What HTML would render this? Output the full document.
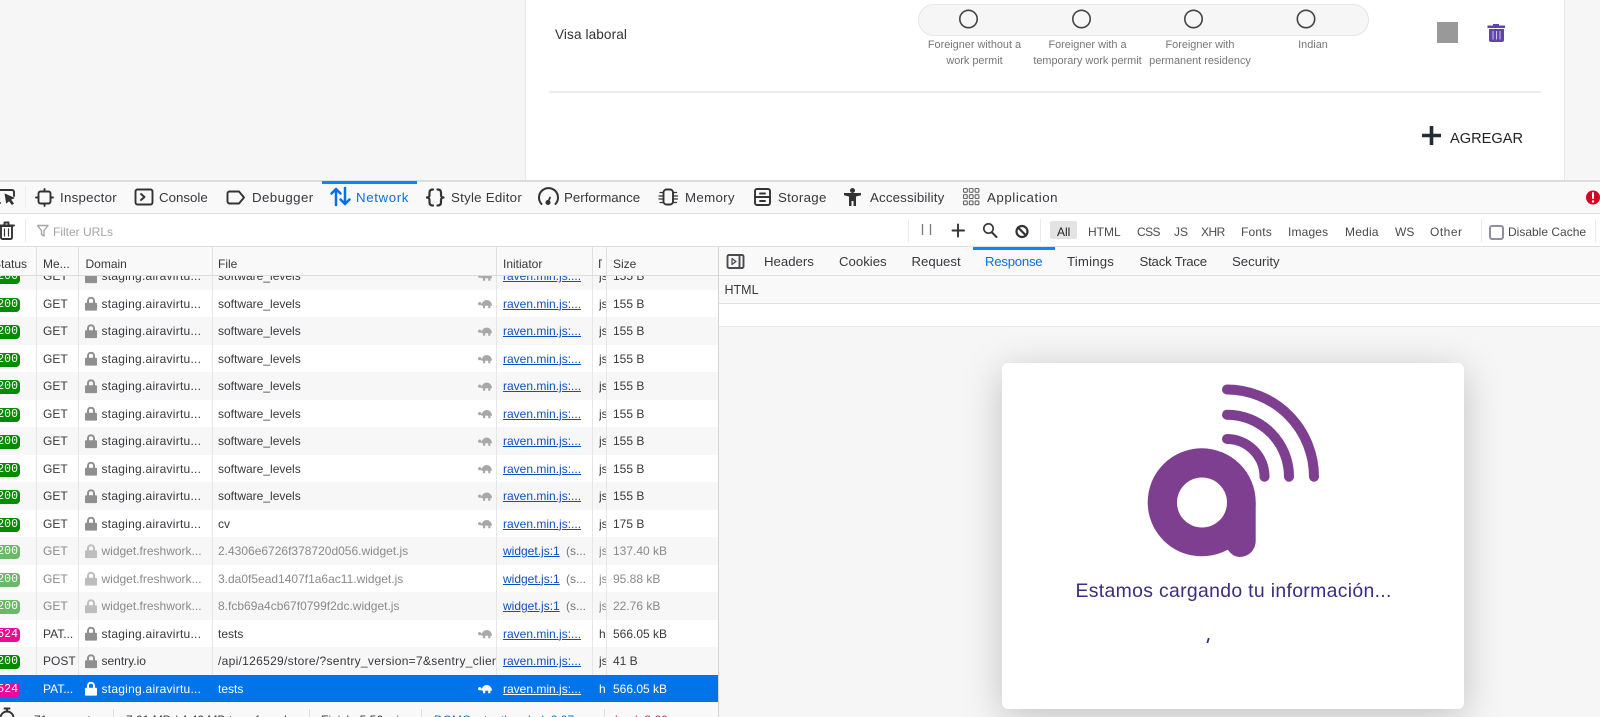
<!DOCTYPE html>
<html><head><meta charset="utf-8"><title>Network</title>
<style>
html,body{margin:0;padding:0;width:1600px;height:717px;overflow:hidden;background:#f6f6f6;font-family:"Liberation Sans",sans-serif;color:#333}
div,span{position:absolute;white-space:nowrap;box-sizing:border-box}
svg{position:absolute;left:0;top:0;overflow:visible}
.tb{font-size:13.3px;top:189px;line-height:17px;color:#38383d}
.fl{font-size:12px;top:225px;line-height:15px;color:#4a4a4f}
.h{font-size:12px;top:257px;line-height:15px;color:#38383d}
.rt{font-size:13.2px;top:253px;line-height:17px;color:#38383d}
.r{left:0;width:718px;height:27.5px;line-height:29px;font-size:12px;color:#38383d;overflow:hidden;background:#fff}
.g{background:#f7f7f7}
.w{color:#8a8a8a}
.b{left:-6px;top:8px;width:26px;height:14px;border-radius:4px;background:#058b00;color:#fff;font:11.5px/14px "Liberation Mono",monospace;text-align:right;padding-right:2px}
.p{background:#e90a9b}
.w .b{background:#6cb868}
.m{left:43px}.d{left:101.5px}.a{letter-spacing:.25px}.f{left:218px;width:278px;overflow:hidden}.i{left:503px;color:#0f4fbd;text-decoration:underline}.x{left:566px;color:#777}.t{left:599px;width:7px;overflow:hidden}.z{left:613px}
.w .i{color:#0f4fbd}
.s{background:#0074e8;color:#fff}.s .i{color:#fff}
.lb{font-size:10.9px;color:#777;text-align:center;line-height:16px;width:130px;top:37px}
</style></head><body>

<!-- top page card -->
<div style="left:525px;top:0;width:1040px;height:180px;background:#fff;border-left:1px solid #e8e8e8;border-right:1px solid #e8e8e8"></div>
<div style="left:555px;top:26px;font-size:13.6px;letter-spacing:.1px;line-height:18px;color:#333">Visa laboral</div>
<div style="left:918px;top:4px;width:451px;height:32px;border-radius:16px;background:#f6f6f6;border:1px solid #e6e6e6"></div>
<div class="lb" style="left:909.5px">Foreigner without a<br>work permit</div>
<div class="lb" style="left:1022.5px">Foreigner with a<br>temporary work permit</div>
<div class="lb" style="left:1135px">Foreigner with<br>permanent residency</div>
<div class="lb" style="left:1248px">Indian</div>
<div style="left:1437px;top:22px;width:21px;height:21px;background:#999"></div>
<div style="left:549px;top:91px;width:992px;height:2px;background:#ececec"></div>
<div style="left:1450px;top:130px;font-size:14.6px;line-height:18px;color:#222">AGREGAR</div>

<!-- devtools toolbar -->
<div style="left:0;top:180px;width:1600px;height:34px;background:#f9f9f9;border-top:2px solid #dcdcdc;border-bottom:1px solid #e0e0e0"></div>
<div style="left:0;top:214px;width:1600px;height:33px;background:#fff;border-bottom:1px solid #e0e0e0"></div>
<div style="left:322px;top:181px;width:95px;height:2.5px;background:#0a84ff"></div>
<div class="tb" style="left:60px;letter-spacing:.25px">Inspector</div>
<div class="tb" style="left:159px">Console</div>
<div class="tb" style="left:252px;letter-spacing:.4px">Debugger</div>
<div class="tb" style="left:356px;color:#0a6fe0;letter-spacing:.6px">Network</div>
<div class="tb" style="left:451px;letter-spacing:.25px">Style Editor</div>
<div class="tb" style="left:564px">Performance</div>
<div class="tb" style="left:685px;letter-spacing:.3px">Memory</div>
<div class="tb" style="left:778px;letter-spacing:.3px">Storage</div>
<div class="tb" style="left:870px;letter-spacing:.15px">Accessibility</div>
<div class="tb" style="left:987px;letter-spacing:.55px">Application</div>

<div class="fl" style="left:53px;color:#a5a5a5">Filter URLs</div>
<div style="left:1050px;top:221px;width:27px;height:18px;border-radius:2px;background:#e3e3e3"></div>
<div class="fl" style="left:1057px;color:#222">All</div>
<div class="fl" style="left:1088px">HTML</div>
<div class="fl" style="left:1137px;letter-spacing:-.6px">CSS</div>
<div class="fl" style="left:1174px">JS</div>
<div class="fl" style="left:1201px;letter-spacing:-.5px">XHR</div>
<div class="fl" style="left:1241px;letter-spacing:.2px">Fonts</div>
<div class="fl" style="left:1288px;letter-spacing:.15px">Images</div>
<div class="fl" style="left:1345px;letter-spacing:.2px">Media</div>
<div class="fl" style="left:1395px">WS</div>
<div class="fl" style="left:1430px;letter-spacing:.5px">Other</div>
<div style="left:1489px;top:225px;width:14.5px;height:14.5px;border:2px solid #8f8f9d;border-radius:3px;background:#fff"></div>
<div class="fl" style="left:1508px">Disable Cache</div>
<div style="left:25px;top:186px;width:1px;height:22px;background:#ebebeb"></div>
<div style="left:25px;top:219px;width:1px;height:23px;background:#ebebeb"></div>
<div style="left:908px;top:219px;width:1px;height:23px;background:#ebebeb"></div>
<div style="left:1040px;top:219px;width:1px;height:23px;background:#ebebeb"></div>
<div style="left:1481px;top:219px;width:1px;height:23px;background:#ebebeb"></div>
<div style="left:1595px;top:219px;width:1px;height:23px;background:#ebebeb"></div>

<!-- right panel -->
<div style="left:718px;top:247px;width:882px;height:470px;background:#f6f6f6"></div>
<div style="left:718px;top:247px;width:882px;height:29px;background:#f9f9f9;border-bottom:1px solid #e0e0e0"></div>
<div style="left:718px;top:276px;width:882px;height:28px;background:#f9f9f9;border-bottom:1px solid #e0e0e0"></div>
<div style="left:718px;top:304px;width:882px;height:23px;background:#fff;border-bottom:1px solid #e6e6e6"></div>
<div style="left:973px;top:247px;width:82px;height:2.5px;background:#0a84ff"></div>
<div class="rt" style="left:764px">Headers</div>
<div class="rt" style="left:839px">Cookies</div>
<div class="rt" style="left:911.5px">Request</div>
<div class="rt" style="left:985px;color:#0a6fe0;letter-spacing:-.25px">Response</div>
<div class="rt" style="left:1067px;letter-spacing:.2px">Timings</div>
<div class="rt" style="left:1139.5px;letter-spacing:-.2px">Stack Trace</div>
<div class="rt" style="left:1232px">Security</div>
<div style="left:724.5px;top:283px;font-size:12.5px;line-height:15px;color:#38383d">HTML</div>

<!-- modal -->
<div style="left:1002px;top:363px;width:462px;height:346px;background:#fff;border-radius:6px;box-shadow:0 8px 40px rgba(0,0,0,.22)"></div>
<div style="left:1075.5px;top:580px;font-size:19.4px;line-height:22px;letter-spacing:.33px;color:#3d2b80">Estamos cargando tu información...</div>

<!-- table rows -->
<div style="left:0;top:275px;width:718px;height:427px;overflow:hidden;background:#fff">
<div class="r g" style="top:-13px"><span class="b">200</span><span class="m">GET</span><span class="d a">staging.airavirtu...</span><span class="f">software_levels</span><span class="i">raven.min.js:...</span><span class="t">js</span><span class="z">155 B</span></div>
<div class="r" style="top:14.5px"><span class="b">200</span><span class="m">GET</span><span class="d a">staging.airavirtu...</span><span class="f">software_levels</span><span class="i">raven.min.js:...</span><span class="t">js</span><span class="z">155 B</span></div>
<div class="r g" style="top:42px"><span class="b">200</span><span class="m">GET</span><span class="d a">staging.airavirtu...</span><span class="f">software_levels</span><span class="i">raven.min.js:...</span><span class="t">js</span><span class="z">155 B</span></div>
<div class="r" style="top:69.5px"><span class="b">200</span><span class="m">GET</span><span class="d a">staging.airavirtu...</span><span class="f">software_levels</span><span class="i">raven.min.js:...</span><span class="t">js</span><span class="z">155 B</span></div>
<div class="r g" style="top:97px"><span class="b">200</span><span class="m">GET</span><span class="d a">staging.airavirtu...</span><span class="f">software_levels</span><span class="i">raven.min.js:...</span><span class="t">js</span><span class="z">155 B</span></div>
<div class="r" style="top:124.5px"><span class="b">200</span><span class="m">GET</span><span class="d a">staging.airavirtu...</span><span class="f">software_levels</span><span class="i">raven.min.js:...</span><span class="t">js</span><span class="z">155 B</span></div>
<div class="r g" style="top:152px"><span class="b">200</span><span class="m">GET</span><span class="d a">staging.airavirtu...</span><span class="f">software_levels</span><span class="i">raven.min.js:...</span><span class="t">js</span><span class="z">155 B</span></div>
<div class="r" style="top:179.5px"><span class="b">200</span><span class="m">GET</span><span class="d a">staging.airavirtu...</span><span class="f">software_levels</span><span class="i">raven.min.js:...</span><span class="t">js</span><span class="z">155 B</span></div>
<div class="r g" style="top:207px"><span class="b">200</span><span class="m">GET</span><span class="d a">staging.airavirtu...</span><span class="f">software_levels</span><span class="i">raven.min.js:...</span><span class="t">js</span><span class="z">155 B</span></div>
<div class="r" style="top:234.5px"><span class="b">200</span><span class="m">GET</span><span class="d a">staging.airavirtu...</span><span class="f">cv</span><span class="i">raven.min.js:...</span><span class="t">js</span><span class="z">175 B</span></div>
<div class="r g w" style="top:262px"><span class="b">200</span><span class="m">GET</span><span class="d">widget.freshwork...</span><span class="f">2.4306e6726f378720d056.widget.js</span><span class="i">widget.js:1</span><span class="x">(s...</span><span class="t">js</span><span class="z">137.40 kB</span></div>
<div class="r w" style="top:289.5px"><span class="b">200</span><span class="m">GET</span><span class="d">widget.freshwork...</span><span class="f">3.da0f5ead1407f1a6ac11.widget.js</span><span class="i">widget.js:1</span><span class="x">(s...</span><span class="t">js</span><span class="z">95.88 kB</span></div>
<div class="r g w" style="top:317px"><span class="b">200</span><span class="m">GET</span><span class="d">widget.freshwork...</span><span class="f">8.fcb69a4cb67f0799f2dc.widget.js</span><span class="i">widget.js:1</span><span class="x">(s...</span><span class="t">js</span><span class="z">22.76 kB</span></div>
<div class="r" style="top:344.5px"><span class="b p">524</span><span class="m">PAT...</span><span class="d a">staging.airavirtu...</span><span class="f">tests</span><span class="i">raven.min.js:...</span><span class="t">h</span><span class="z">566.05 kB</span></div>
<div class="r g" style="top:372px"><span class="b">200</span><span class="m">POST</span><span class="d">sentry.io</span><span class="f" style="letter-spacing:.3px">/api/126529/store/?sentry_version=7&amp;sentry_client</span><span class="i">raven.min.js:...</span><span class="t">js</span><span class="z">41 B</span></div>
<div style="left:36px;top:0;width:1px;height:427px;background:#e6e6e6"></div>
<div style="left:78px;top:0;width:1px;height:427px;background:#e6e6e6"></div>
<div style="left:212px;top:0;width:1px;height:427px;background:#e6e6e6"></div>
<div style="left:496px;top:0;width:1px;height:427px;background:#e6e6e6"></div>
<div style="left:592px;top:0;width:1px;height:427px;background:#e6e6e6"></div>
<div style="left:606px;top:0;width:1px;height:427px;background:#e6e6e6"></div>
<div class="r s" style="top:399.5px"><span class="b p">524</span><span class="m">PAT...</span><span class="d a">staging.airavirtu...</span><span class="f">tests</span><span class="i">raven.min.js:...</span><span class="t">h</span><span class="z">566.05 kB</span></div>
<svg width="718" height="427" viewBox="0 0 718 427">
<defs>
<symbol id="lk" viewBox="0 0 12 14"><path fill="currentColor" fill-rule="evenodd" d="M1 6h1V4a4 4 0 0 1 8 0v2h1a1 1 0 0 1 1 1v6a1 1 0 0 1-1 1H1a1 1 0 0 1-1-1V7a1 1 0 0 1 1-1zM4 6h4V4a2 2 0 0 0-4 0z"/></symbol>
<symbol id="tu" viewBox="0 0 14 10"><path fill="currentColor" d="M3.500 6.500a5.200 5.200 0 0 1 10.400 0v.5H3.500zM0 4.800a1.700 1.700 0 0 1 3.200-.6L4 6.200 1.500 6.500A1.700 1.700 0 0 1 0 4.800zM5 7h2.200v2.500H5zM10.200 7h2.200v2.500h-2.200z"/></symbol>
</defs>
<g color="#8f8f8f">
<use href="#lk" x="85" y="-5.750" width="12" height="14"/><use href="#lk" x="85" y="21.750" width="12" height="14"/><use href="#lk" x="85" y="49.250" width="12" height="14"/><use href="#lk" x="85" y="76.750" width="12" height="14"/><use href="#lk" x="85" y="104.250" width="12" height="14"/><use href="#lk" x="85" y="131.750" width="12" height="14"/><use href="#lk" x="85" y="159.250" width="12" height="14"/><use href="#lk" x="85" y="186.750" width="12" height="14"/><use href="#lk" x="85" y="214.250" width="12" height="14"/><use href="#lk" x="85" y="241.750" width="12" height="14"/><use href="#lk" x="85" y="351.750" width="12" height="14"/><use href="#lk" x="85" y="379.250" width="12" height="14"/>
</g>
<g color="#bdbdbd"><use href="#lk" x="85" y="269.250" width="12" height="14"/><use href="#lk" x="85" y="296.750" width="12" height="14"/><use href="#lk" x="85" y="324.250" width="12" height="14"/></g>
<use href="#lk" color="#fff" x="85" y="406.750" width="12" height="14"/>
<g color="#a8a8a8">
<use href="#tu" x="478" y="-3.750" width="14" height="10"/><use href="#tu" x="478" y="23.750" width="14" height="10"/><use href="#tu" x="478" y="51.250" width="14" height="10"/><use href="#tu" x="478" y="78.750" width="14" height="10"/><use href="#tu" x="478" y="106.250" width="14" height="10"/><use href="#tu" x="478" y="133.750" width="14" height="10"/><use href="#tu" x="478" y="161.250" width="14" height="10"/><use href="#tu" x="478" y="188.750" width="14" height="10"/><use href="#tu" x="478" y="216.250" width="14" height="10"/><use href="#tu" x="478" y="243.750" width="14" height="10"/><use href="#tu" x="478" y="353.750" width="14" height="10"/>
</g>
<use href="#tu" color="#fff" x="478" y="408.750" width="14" height="10"/>
</svg>
</div>

<!-- table header -->
<div style="left:0;top:247px;width:718px;height:29px;background:#f9f9f9;border-bottom:1px solid #dcdcdc"></div>
<div class="h" style="left:-7px">Status</div>
<div class="h" style="left:43px">Me...</div>
<div class="h" style="left:85.500px">Domain</div>
<div class="h" style="left:218px">File</div>
<div class="h" style="left:503px">Initiator</div>
<div class="h" style="left:599px;width:3px;overflow:hidden;text-indent:-3px">T</div>
<div class="h" style="left:613px">Size</div>
<div style="left:36px;top:247px;width:1px;height:28px;background:#e0e0e0"></div>
<div style="left:78px;top:247px;width:1px;height:28px;background:#e0e0e0"></div>
<div style="left:212px;top:247px;width:1px;height:28px;background:#e0e0e0"></div>
<div style="left:496px;top:247px;width:1px;height:28px;background:#e0e0e0"></div>
<div style="left:592px;top:247px;width:1px;height:28px;background:#e0e0e0"></div>
<div style="left:606px;top:247px;width:1px;height:28px;background:#e0e0e0"></div>
<div style="left:718px;top:247px;width:1px;height:470px;background:#d4d4d4"></div>

<!-- status bar -->
<div style="left:0;top:702px;width:718px;height:15px;background:#f9f9f9"></div>
<div style="left:113px;top:709px;width:1px;height:8px;background:#ddd"></div>
<div style="left:309px;top:709px;width:1px;height:8px;background:#ddd"></div>
<div style="left:421px;top:709px;width:1px;height:8px;background:#ddd"></div>
<div style="left:604px;top:709px;width:1px;height:8px;background:#ddd"></div>
<div style="left:0;top:702px;width:718px;height:15px;overflow:hidden;font-size:12px;line-height:14px;color:#38383d">
<span style="left:34px;top:11px">71 requests</span>
<span style="left:126px;top:11px">7.01 MB / 4.40 MB transferred</span>
<span style="left:321px;top:11px">Finish: 5.56 min</span>
<span style="left:434px;top:11px;color:#0a6fe0">DOMContentLoaded: 2.07 s</span>
<span style="left:615px;top:11px;color:#d7264f">load: 3.66 s</span>
</div>

<!-- vector overlay -->
<svg width="1600" height="717" viewBox="0 0 1600 717" fill="none">
<!-- radios -->
<g stroke="#444" stroke-width="1.600"><circle cx="968.500" cy="19" r="8.700"/><circle cx="1081.500" cy="19" r="8.700"/><circle cx="1193.500" cy="19" r="8.700"/><circle cx="1306" cy="19" r="8.700"/></g>
<!-- page trash -->
<path fill="#5f45a8" d="M1493 24h6v1.500h6v2.500h-17.500v-2.500h5.500zM1489 29h15v11a2 2 0 0 1-2 2h-11a2 2 0 0 1-2-2z"/>
<path stroke="#cfc6e6" stroke-width="1" d="M1493 31v8.500M1496.500 31v8.500M1500 31v8.500"/>
<!-- plus -->
<path stroke="#222d3a" stroke-width="3.600" d="M1431.500 126v19M1422 135.500h19"/>

<g stroke="#333" stroke-width="1.900" stroke-linejoin="round" stroke-linecap="round">
<!-- pick -->
<path d="M-3 190h15a2 2 0 0 1 2 2v4M-3 203h3"/>
<path fill="#333" stroke-width=".8" d="M5 194l9 4-3.500 1.500 3 4-1.500 1-3-4L6.500 203z"/>
<!-- inspector -->
<rect x="38.500" y="191.500" width="12" height="12" rx="2"/>
<path d="M44.500 189v2.500M44.500 203.500v2.500M36 197.500h2.500M50.500 197.500H53"/>
<!-- console -->
<rect x="135.500" y="189.500" width="17" height="15" rx="2"/>
<path d="M141 194l3.500 3-3.500 3"/>
<!-- debugger -->
<path d="M229.500 191.500h9.500l5 6-5 6h-9.500a2 2 0 0 1-2-2v-8a2 2 0 0 1 2-2z"/>
<!-- style editor -->
<path stroke-width="2.200" d="M433 189.500c-2.500 0-3.500 1-3.500 3v2.500c0 1.500-1 2.500-2.500 2.500 1.500 0 2.500 1 2.500 2.500v2.500c0 2 1 3 3.500 3M437.500 189.500c2.500 0 3.500 1 3.500 3v2.500c0 1.500 1 2.500 2.500 2.500-1.500 0-2.500 1-2.500 2.500v2.500c0 2-1 3-3.500 3"/>
<!-- performance -->
<path stroke-width="2" d="M541.500 204A9.500 9.500 0 1 1 555.500 204"/>
<path stroke-width="1.800" d="M548 202.500l2-5"/><circle cx="548" cy="202.500" r="1.600" fill="#333"/>
<!-- memory -->
<rect x="663.500" y="189.500" width="9.500" height="15" rx="3"/>
<path stroke-width="1.200" d="M660 192.500h3M659 196h4M659 199h4M660 202.500h3M673.500 192.500h3M673.500 196h4M673.500 199h4M673.500 202.500h3"/>
<!-- storage -->
<rect x="755" y="189" width="15" height="16" rx="2"/>
<path d="M755 197h15M760 193.500h5M760 201h5"/>
<!-- application -->
<g stroke-width="1.100" stroke="#666"><rect x="963.500" y="188.500" width="3.800" height="3.800" rx="1"/><rect x="969.300" y="188.500" width="3.800" height="3.800" rx="1"/><rect x="975.100" y="188.500" width="3.800" height="3.800" rx="1"/><rect x="963.500" y="194.700" width="3.800" height="3.800" rx="1"/><rect x="969.300" y="194.700" width="3.800" height="3.800" rx="1"/><rect x="975.100" y="194.700" width="3.800" height="3.800" rx="1"/><rect x="963.500" y="200.900" width="3.800" height="3.800" rx="1"/><rect x="969.300" y="200.900" width="3.800" height="3.800" rx="1"/><rect x="975.100" y="200.900" width="3.800" height="3.800" rx="1"/></g>
<!-- trash devtools -->
<path d="M1 226h11v11.500a1.500 1.500 0 0 1-1.500 1.500h-8A1.500 1.500 0 0 1 1 237.500zM-1 225.500h15M4.500 225v-2.500h4v2.500"/><path stroke-width="1.200" d="M4.500 229v7M8.500 229v7"/>
<!-- plus toolbar -->
<path d="M958 224.500v12M952.500 230.500h11.500"/>
<!-- search -->
<circle cx="988.500" cy="228.500" r="4.700" stroke-width="1.600"/><path stroke-width="2" d="M992 232.500l4.500 4.500"/>
<!-- block -->
<circle cx="1022" cy="231.500" r="5.500" stroke-width="2.200"/><path stroke-width="2.200" d="M1018 227.500l8 8"/>
<!-- panel icon -->
<rect x="727.500" y="255" width="16" height="13" rx="1.500" stroke="#4a4a4f"/><path stroke="#4a4a4f" d="M739.500 255v13"/><path stroke="#4a4a4f" stroke-width="1.200" d="M732 258.500l4 3-4 3z"/>
<!-- timer -->
<circle cx="7" cy="718" r="6.500"/><path d="M4.500 708.500h5M7 708.500v3"/>
</g>
<!-- accessibility -->
<circle cx="852.500" cy="190.500" r="2.500" fill="#333"/>
<path fill="#333" d="M844 193h17v2.200l-5 1.300V206h-2.500v-5h-2v5H849v-9.500l-5-1.300z"/>
<!-- network arrows -->
<path stroke="#0a6fe0" stroke-width="2.500" stroke-linecap="round" stroke-linejoin="round" d="M336 205V189M331.500 193.500l4.500-4.500 4.500 4.500M345 188v16M340.500 199.500l4.500 4.500 4.500-4.500"/>
<!-- filter funnel -->
<path stroke="#a5a5a5" stroke-width="1.400" stroke-linejoin="round" d="M37.500 225.500h10.500l-4 5v5.500l-2.500-1.500v-4z"/>
<!-- pause -->
<path stroke="#777" stroke-width="1.300" d="M922.500 224v11M930.500 224v11"/>
<!-- error icon -->
<circle cx="1593" cy="197.500" r="7" fill="#d70022"/>
<path stroke="#fff" stroke-width="2" stroke-linecap="round" d="M1593 193v5"/><circle cx="1593" cy="201.500" r="1.200" fill="#fff"/>
<!-- logo -->
<circle cx="1201.700" cy="502.300" r="54" fill="#7f3f90"/>
<path fill="#7f3f90" d="M1201.700 502H1255.700V541A16 16 0 0 1 1239.700 557Q1233 557 1228 550L1201 525Z"/>
<circle cx="1202" cy="502.500" r="25" fill="#fff"/>
<g stroke="#7f3f90" stroke-width="10" stroke-linecap="round"><path d="M1227 439A37.700 37.700 0 0 1 1264.500 476.700"/><path d="M1227 414.700A62 62 0 0 1 1289 476.700"/><path d="M1227 389.500A87.300 87.300 0 0 1 1314 476.700"/></g>
<path stroke="#3d2b80" stroke-width="1.800" d="M1207.300 643l1.500-5"/>
</svg>
</body></html>
